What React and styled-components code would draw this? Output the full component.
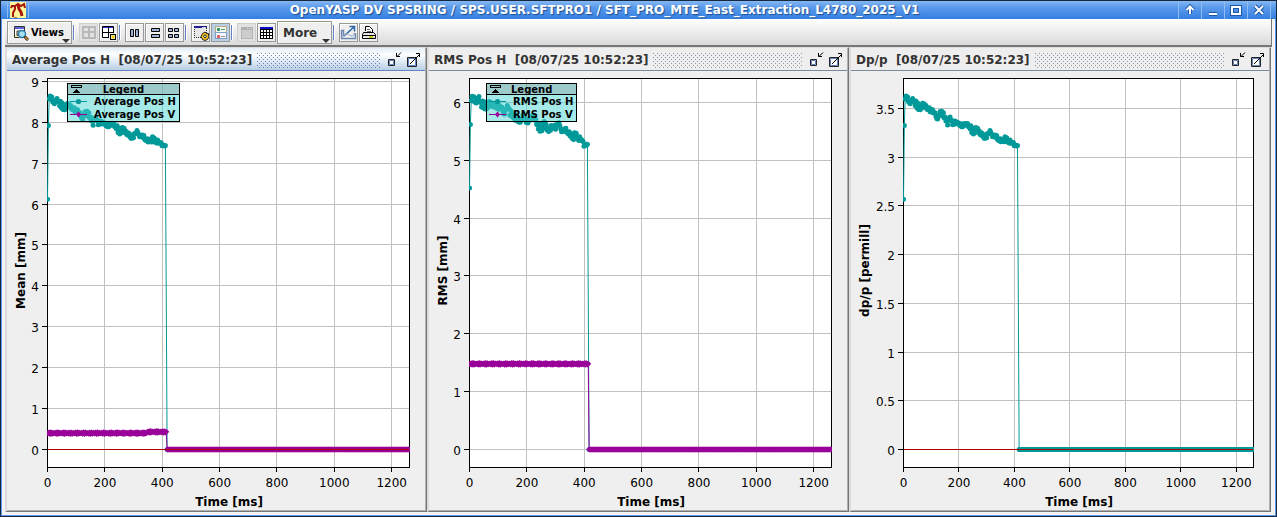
import React, { useLayoutEffect, useRef, useState } from "react";
import styled, { createGlobalStyle, css } from "styled-components";

const TEAL = "#009999";
const PURPLE = "#990099";

const GlobalStyle = createGlobalStyle`
  * { box-sizing: border-box; }
  body {
    margin: 0;
    background: #efefef;
    font-family: "DejaVu Sans", Verdana, sans-serif;
    font-size: 12px;
    color: #333;
  }
`;

/* ---------- window frame ---------- */

const Window = styled.div`
  display: flex;
  flex-direction: column;
  height: 100vh;
  min-height: 320px;
  border: 1px solid #14283f;
  background: #f3f3f3;
`;

const TitleBar = styled.header`
  display: flex;
  align-items: center;
  flex: none;
  height: 18px;
  padding: 0 5px 0 6px;
  background: linear-gradient(#86b8f2, #5b9aec 35%, #3480e0);
`;

const AppIcon = styled.div`
  display: flex;
  justify-content: center;
  width: 22px;
  border: solid #8fbcf3;
  border-width: 0 1px;
`;

const WindowTitle = styled.h1`
  flex: 1;
  margin: 0;
  padding-left: 2px;
  font-size: 12px;
  line-height: 18px;
  text-align: center;
  color: #fff;
  text-shadow: 1px 1px 1px #1c4f93;
  white-space: nowrap;
  overflow: hidden;
`;

const WindowButton = styled.button`
  display: flex;
  align-items: center;
  justify-content: center;
  width: 23px;
  height: 18px;
  padding: 0;
  border: 0;
  border-left: 1px solid #8fbcf3;
  background: none;

  &:last-of-type {
    width: 24px;
    border-right: 1px solid #8fbcf3;
  }
`;

const Body = styled.div`
  display: flex;
  flex-direction: column;
  flex: 1;
  min-height: 0;
  padding: 0 3px 3px;
  border: solid #5b9aec;
  border-width: 0 1px 1px;
`;

/* ---------- toolbar ---------- */

const Toolbar = styled.div`
  display: flex;
  align-items: center;
  gap: 1px;
  flex: none;
  height: 28px;
  padding: 1px 2px 0;
  background: linear-gradient(#fff, #dadada);
  border: solid #777;
  border-width: 0 1px 2px 0;
`;

const buttonFace = css`
  padding: 0;
  border: 1px solid #999;
  background: #efefef;
  box-shadow: inset 1px 1px 0 #fff;
  color: #333;
  font-family: inherit;
  font-weight: bold;
`;

const ToolButton = styled.button`
  ${buttonFace}
  display: flex;
  width: 19px;
  height: 19px;
  ${(p) => p.disabled && "border-color: #d0d0d0; background: #e2e2e2; box-shadow: none;"}
  ${(p) => p["aria-pressed"] && "background: #b8cfe5; box-shadow: none;"}
`;

const MenuButton = styled.button`
  ${buttonFace}
  position: relative;
  display: flex;
  align-items: center;
  gap: 2px;
  width: ${(p) => p.$width};
  height: 23px;
  padding-left: 5px;
  font-size: ${(p) => (p.$small ? "10px" : "12px")};
  color: ${(p) => (p.$small ? "#000" : "#333")};

  &::after {
    content: "";
    position: absolute;
    right: 1px;
    bottom: 0;
    border: solid transparent;
    border-width: 4px 4px 0;
    border-top-color: #333;
  }
`;

const Separator = styled.span`
  width: 5px;
  height: 15px;
  border-left: 1px solid #6382bf;
  box-shadow: inset 1px 0 0 #fff;
`;

/* ---------- panels ---------- */

const Desktop = styled.main`
  display: grid;
  grid-template-columns: repeat(3, minmax(0, 1fr));
  flex: 1;
  min-height: 0;
  margin-right: 1px;
`;

const Panel = styled.section`
  display: flex;
  flex-direction: column;
  min-height: 0;
  padding: 0 1px 1px 0;
  border: solid #777;
  border-width: 1px 1px 1px 2px;
  border-top-color: #dcdcdc;
  border-left-color: #dcdcdc;
  box-shadow: inset -1px -1px 0 #b0b0b0;
  background: #efefef;
`;

const PanelHeader = styled.div`
  --bump: ${(p) => (p.$active ? "#6382bf" : "#8a97a9")};
  display: flex;
  align-items: center;
  flex: none;
  height: 23px;
  padding: 2px 3px 0 5px;
  border-bottom: 1px solid ${(p) => (p.$active ? "#6382bf" : "#7a8a99")};
  background: ${(p) =>
    p.$active ? "linear-gradient(#e4eef7, #fff 30%, #b8cfe5)" : "#eee"};
`;

const PanelTitle = styled.h2`
  margin: 0;
  font-size: 12px;
  line-height: 16px;
  white-space: pre;
`;

const Bumps = styled.div`
  flex: 1;
  height: 15px;
  margin: 0 5px 0 5px;
  background-image:
    conic-gradient(from 270deg at 1px 1px, var(--bump) 90deg, transparent 0),
    conic-gradient(from 270deg at 1px 1px, var(--bump) 90deg, transparent 0);
  background-size: 4px 4px;
  background-position: 0 0, 2px 2px;
`;

const PanelButton = styled.button`
  display: flex;
  width: 16px;
  height: 16px;
  margin-left: 4px;
  padding: 0;
  border: 0;
  background: none;

  ${Bumps} + & { margin-left: 0; }
`;

const ChartArea = styled.div`
  position: relative;
  flex: 1;
  min-height: 0;
  overflow: hidden;
`;

const ChartSvg = styled.svg`
  position: absolute;
  inset: 0;
  font-size: 12px;
`;

const AxisTitle = styled.text`
  font-weight: bold;
  fill: #000;
  text-anchor: middle;
`;

const Legend = styled.div`
  position: absolute;
  top: 12px;
  left: ${(p) => p.$left};
  border: 1px solid #000;
  background: rgba(76, 211, 211, 0.5);
  font-size: 10px;
  font-weight: bold;
  line-height: 13px;
  color: #000;
  white-space: nowrap;
`;

const LegendTitle = styled.div`
  position: relative;
  height: 11px;
  line-height: 12px;
  border-bottom: 1px solid #000;
  background: rgba(140, 140, 140, 0.32);
  text-align: center;

  svg { position: absolute; left: 2px; top: 0; }
`;

const LegendRow = styled.div`
  display: flex;
  align-items: center;
  gap: 7px;
  padding: 0 3px 0 2px;
`;

/* ---------- measured data ---------- */

const meanH = [
  8.67, 8.46, 8.54, 8.48, 8.41, 8.34, 8.41, 8.36, 8.32, 8.28, 8.26, 8.08, 8.22, 8.23,
  8.1, 7.99, 8.11, 7.94, 8.0, 7.96, 7.91, 7.92, 7.91, 7.89, 7.75, 7.83, 7.81, 7.74,
  7.61, 7.66, 7.78, 7.69, 7.7, 7.57, 7.56, 7.55, 7.59, 7.49, 7.52, 7.45, 7.42,
];
const rmsH = [
  6.13, 5.98, 6.09, 5.97, 5.96, 5.92, 5.97, 5.92, 5.97, 5.9, 5.94, 5.79, 5.93, 5.84,
  5.77, 5.75, 5.7, 5.7, 5.76, 5.64, 5.71, 5.73, 5.67, 5.58, 5.53, 5.64, 5.57, 5.54,
  5.58, 5.57, 5.64, 5.53, 5.55, 5.48, 5.46, 5.37, 5.45, 5.34, 5.37, 5.26, 5.27,
];

const END = 1262;
const STEP = 3;

// Samples taken every 10 ms are filled in to the acquisition step.
function fill(head, samples, noise) {
  const points = [...head];
  for (let t = 9; t < 414; t += STEP) {
    const pos = Math.max(0, t / 10 - 1);
    const i = Math.min(samples.length - 1, Math.floor(pos));
    const next = samples[Math.min(samples.length - 1, i + 1)];
    const v = samples[i] + (next - samples[i]) * (pos - i);
    const settle = t > 400 ? 0.3 : 1;
    points.push([t, v + settle * noise * (Math.sin(t * 7.3) + Math.sin(t * t * 0.37)) * 0.6]);
  }
  for (let t = 417; t <= END; t += STEP) points.push([t, 0]);
  return points;
}

function flat(level, rise, noise) {
  const points = [];
  for (let t = 0; t < 416; t += STEP) {
    points.push([t, level + (t > 345 ? rise : 0) + noise * Math.sin(t * 5.1)]);
  }
  for (let t = 417; t <= END; t += STEP) points.push([t, 0]);
  return points;
}

const meanSeries = fill([[0, 6.12], [3, 7.92], [6, 8.57]], meanH, 0.06);
const rmsSeries = fill([[0, 4.52], [3, 5.62], [6, 6.03]], rmsH, 0.05);
const dispersion = 0.42;

const charts = [
  {
    title: "Average Pos H  [08/07/25 10:52:23]",
    active: true,
    zeroLine: true,
    yTitle: "Mean [mm]",
    yTicks: [0, 1, 2, 3, 4, 5, 6, 7, 8, 9],
    yRange: [-0.44, 9.07],
    left: 40,
    legendLeft: "60px",
    series: [
      { name: "Average Pos H", color: TEAL, points: meanSeries },
      { name: "Average Pos V", color: PURPLE, points: flat(0.4, 0.03, 0.02), diamond: true },
    ],
  },
  {
    title: "RMS Pos H  [08/07/25 10:52:23]",
    yTitle: "RMS [mm]",
    yTicks: [0, 1, 2, 3, 4, 5, 6],
    yRange: [-0.311, 6.413],
    left: 40,
    legendLeft: "57px",
    series: [
      { name: "RMS Pos H", color: TEAL, points: rmsSeries },
      { name: "RMS Pos V", color: PURPLE, points: flat(1.48, 0, 0.015), diamond: true },
    ],
  },
  {
    title: "Dp/p  [08/07/25 10:52:23]",
    zeroLine: true,
    yTitle: "dp/p [permill]",
    yTicks: [0, 0.5, 1, 1.5, 2, 2.5, 3, 3.5],
    yRange: [-0.185, 3.809],
    left: 52,
    series: [
      { name: "Dp/p", color: TEAL, points: meanSeries.map(([t, v]) => [t, v * dispersion]) },
    ],
  },
];

/* ---------- chart ---------- */

function useSize() {
  const ref = useRef(null);
  const [size, setSize] = useState({ width: 0, height: 0 });
  useLayoutEffect(() => {
    const measure = () =>
      setSize({ width: ref.current.clientWidth, height: ref.current.clientHeight });
    measure();
    const observer = new ResizeObserver(measure);
    observer.observe(ref.current);
    return () => observer.disconnect();
  }, []);
  return [ref, size];
}

function Series({ series, x, y }) {
  const { points, color, diamond } = series;
  const path = points.map(([t, v], i) => `${i ? "L" : "M"}${x(t)} ${y(v)}`).join("");
  return (
    <g fill={color}>
      <path d={path} fill="none" stroke={color} />
      {points.map(([t, v]) => {
        const cx = x(t);
        const cy = y(v);
        return diamond ? (
          <path key={t} d={`M${cx - 3} ${cy}L${cx} ${cy - 3}L${cx + 3} ${cy}L${cx} ${cy + 3}Z`} />
        ) : (
          <circle key={t} cx={cx} cy={cy} r={2.5} />
        );
      })}
    </g>
  );
}

function Chart({ chart, id }) {
  const [ref, { width, height }] = useSize();
  const left = chart.left;
  const right = width - 16;
  const top = 7;
  const bottom = height - 43;
  const [lo, hi] = chart.yRange;
  const x = (t) => left + 0.5 + (t / END) * (right - left);
  const y = (v) => top + 0.5 + ((hi - v) / (hi - lo)) * (bottom - top);
  const snap = (n) => Math.floor(n) + 0.5;
  const xTicks = [0, 200, 400, 600, 800, 1000, 1200];

  return (
    <ChartArea ref={ref}>
      {width > 0 && (
        <ChartSvg width={width} height={height} role="img" aria-label={chart.title}>
          <clipPath id={id}>
            <rect x={left} y={top} width={right - left + 1} height={bottom - top} />
          </clipPath>
          <rect x={left} y={top} width={right - left} height={bottom - top} fill="#fff" />
          <g stroke="#c0c0c0">
            {xTicks.map((t) => (
              <path key={t} d={`M${snap(x(t))} ${top}V${bottom}`} />
            ))}
            {chart.yTicks.map((v) => (
              <path key={v} d={`M${left} ${snap(y(v))}H${right}`} />
            ))}
          </g>
          <rect
            x={left + 0.5}
            y={top + 0.5}
            width={right - left}
            height={bottom - top}
            fill="none"
            stroke="#000"
          />
          <g stroke="#000">
            {xTicks.map((t) => (
              <path key={t} d={`M${snap(x(t))} ${bottom}v5`} />
            ))}
            {chart.yTicks.map((v) => (
              <path key={v} d={`M${left - 5} ${snap(y(v))}h5`} />
            ))}
          </g>
          <g clipPath={`url(#${id})`}>
            {chart.series.map((s) => (
              <Series key={s.name} series={s} x={x} y={y} />
            ))}
            {chart.zeroLine && (
              <path d={`M${left + 1} ${snap(y(0))}H${right}`} stroke="#b00000" />
            )}
          </g>
          <g fill="#000">
            {xTicks.map((t) => (
              <text key={t} x={x(t)} y={bottom + 20} textAnchor="middle">{t}</text>
            ))}
            {chart.yTicks.map((v) => (
              <text key={v} x={left - 8} y={snap(y(v)) + 5} textAnchor="end">{v}</text>
            ))}
          </g>
          <AxisTitle x={(left + right) / 2 + 1} y={bottom + 39}>Time [ms]</AxisTitle>
          <AxisTitle transform={`translate(18 ${(top + bottom) / 2 - 2}) rotate(-90)`}>
            {chart.yTitle}
          </AxisTitle>
        </ChartSvg>
      )}
      {chart.legendLeft && (
        <Legend $left={chart.legendLeft}>
          <LegendTitle>
            <svg width="12" height="10" shapeRendering="crispEdges">
              <path d="M1 1h11v3H1zM6 5l4 4H2z" fill="#000" />
              <path d="M2 2h9v1H2z" fill="#9cc8c8" />
            </svg>
            Legend
          </LegendTitle>
          {chart.series.map((s) => (
            <LegendRow key={s.name}>
              <svg width="17" height="9">
                <path d="M0 4.5h17" stroke={s.color} />
                {s.diamond ? (
                  <path d="M6 4.5l2.500-3 2.500 3-2.500 3z" fill={s.color} />
                ) : (
                  <circle cx="8.5" cy="4.5" r="2.6" fill={s.color} />
                )}
              </svg>
              {s.name}
            </LegendRow>
          ))}
        </Legend>
      )}
    </ChartArea>
  );
}

/* ---------- icons ---------- */

const Icon = ({ children, size = 17 }) => (
  <svg width={size} height={size} viewBox={`0 0 ${size} ${size}`} fill="none" shapeRendering="crispEdges" aria-hidden="true">
    {children}
  </svg>
);

const Gear = () => (
  <g shapeRendering="auto">
    <path d="M13 8l1.5 1.5h2V12l.5.5-1.5 3-2.5 1-2.5-1L9 12.5l1.5-3z" fill="#f2c21c" stroke="#222" />
    <circle cx="13" cy="12.3" r="1.3" fill="#fff" stroke="#222" />
  </g>
);

const icons = {
  yasp: (
    <Icon size={16}>
      <path d="M0 0h16v16H0z" fill="#fff79a" />
      <g shapeRendering="auto" stroke="#a8160c" strokeWidth="2">
        <path d="M1 6l1-2h3l3-2 3 2 3-2 1 4" />
        <path d="M5 4l0 3-2 4 0 4" />
        <path d="M8 3l1 4 2 3 1 4" strokeWidth="3" />
      </g>
      <path d="M4 15h3" stroke="#e07020" />
    </Icon>
  ),
  views: (
    <svg width="16" height="16" fill="none" aria-hidden="true">
      <path d="M1.5 1.5h10v9h-10z" fill="#fff" stroke="#333" />
      <path d="M2 2h9v2H2z" fill="#5a62d8" />
      <path d="M1.5 8.5v4h5M4 6h4v4H4z" stroke="#333" fill="#f4e9b0" />
      <circle cx="9" cy="9" r="3.5" fill="#a6e2f5" stroke="#2a7ba6" strokeWidth="1.4" />
      <path d="M11.5 11.5L15 15" stroke="#222" strokeWidth="3" />
      <path d="M12 12l3 3" stroke="#e08a30" strokeWidth="1.4" />
    </svg>
  ),
  gridOff: (
    <Icon>
      <path d="M3 3h12v11H3zM9 3v11M3 8h12" stroke="#b8b8b8" strokeWidth="2" />
    </Icon>
  ),
  layout: (
    <Icon>
      <g shapeRendering="auto">
        <path d="M2.500 2.500h11v11h-11zM8.500 2v12M2 8.500h12" fill="#fff" stroke="#000" />
        <path d="M3 3h5v1H3zM9 3h4v1H9z" fill="#2a2ae0" />
        <path d="M9 9h7v7H9z" fill="#efefef" />
        <path d="M10 10h6v6h-6z" fill="#000" />
        <path d="M11 11h4v4h-4z" fill="#ece08a" />
        <path d="M12 12h2v2h-2z" fill="#f0c800" />
      </g>
    </Icon>
  ),
  columns: (
    <Icon>
      <path d="M4.500 5.500h3v7h-3zM9.500 5.500h3v7h-3z" fill="#9db4d4" stroke="#000" shapeRendering="auto" />
    </Icon>
  ),
  rows: (
    <Icon>
      <path d="M5.500 4.500h8v3h-8zM5.500 10.500h8v3h-8z" fill="#9db4d4" stroke="#000" shapeRendering="auto" />
    </Icon>
  ),
  grid: (
    <Icon>
      <path d="M2.500 4.500h4v3h-4zM8.500 4.500h4v3h-4zM2.500 10.500h4v3h-4zM8.500 10.500h4v3h-4z" fill="#9db4d4" stroke="#000" shapeRendering="auto" />
    </Icon>
  ),
  settings: (
    <Icon>
      <path d="M2.500 3.500h12v10h-12z" fill="#e6e6e6" stroke="#333" strokeDasharray="1 1" />
      <path d="M2 2h13v2H2z" fill="#20208c" />
      <path d="M10 3h4" stroke="#c8c8f0" />
      <Gear />
    </Icon>
  ),
  legend: (
    <Icon>
      <path d="M3.500 2.500h11v6h-11z" fill="#f5f8f2" stroke="#b9ab84" />
      <path d="M3.500 8.500h11v6h-11z" fill="#f5f8fc" stroke="#7f9fc4" />
      <path d="M5 4h3v3H5z" fill="#35a06a" />
      <path d="M5 11h3v3H5z" fill="#e86060" />
      <path d="M9 5.500h4" stroke="#4f9f78" />
      <path d="M9 12.500h4" stroke="#a8909c" />
    </Icon>
  ),
  windowOff: (
    <Icon>
      <path d="M3.500 3.500h11v11h-11z" fill="#cdcdcd" stroke="#b4b4b4" />
      <path d="M3 3h12v3H3z" fill="#b0b0b0" />
      <path d="M9 4.500h5" stroke="#ddd" strokeDasharray="1 1" />
    </Icon>
  ),
  table: (
    <Icon>
      <path d="M2 3h13v12H2z" fill="#000" />
      <path d="M2 3h13v2H2z" fill="#0a0ac8" />
      {[3, 6, 9, 12].map((cx) =>
        [6, 9, 12].map((cy) => <path key={`${cx}-${cy}`} d={`M${cx} ${cy}h2v2h-2z`} fill="#fff" />)
      )}
    </Icon>
  ),
  exportChart: (
    <Icon>
      <g shapeRendering="auto">
        <path d="M1.500 6v8.500h14V10h-2M1.500 6.500h2v6" stroke="#6b87ad" strokeWidth="1.500" />
        <path d="M4 12l10-9M9.500 2.500h5v5" stroke="#2867a4" strokeWidth="1.500" />
        <path d="M3 12c2 0 2-2 4-2s2 2 7 2" stroke="#8fa8c8" />
      </g>
    </Icon>
  ),
  print: (
    <Icon>
      <path d="M5.500 7V2.500h4l3 3V8" fill="#fff" stroke="#000" shapeRendering="auto" />
      <path d="M7 5h3M7 7h4" stroke="#666" />
      <path d="M3.500 8.500h10l2 2v4h-13v-4z" fill="#e4e4e4" stroke="#000" shapeRendering="auto" />
      <path d="M3 11.500h12" stroke="#000" />
      <path d="M9 13h4" stroke="#c8d020" strokeWidth="2" />
    </Icon>
  ),
  iconify: (
    <Icon size={16}>
      <g shapeRendering="auto">
        <path d="M2.500 7.500h6v6h-6z" fill="#fff" stroke="#222" />
        <path d="M3.500 8.500h4v4h-4z" stroke="#6382bf" />
        <path d="M15 .5l-4 4M10.500 1v3.500H14" stroke="#000" />
      </g>
    </Icon>
  ),
  maximize: (
    <Icon size={16}>
      <g shapeRendering="auto">
        <path d="M1.500 5.500h9v9h-9z" fill="#fff" stroke="#222" />
        <path d="M2.500 6.500h7v7h-7z" stroke="#6382bf" />
        <path d="M4 12l9-9M10 1.500h3.500V5" stroke="#000" />
      </g>
    </Icon>
  ),
};

const WindowGlyph = ({ d }) => (
  <svg width="14" height="14" fill="none" aria-hidden="true">
    <path d={d} stroke="#1d57a5" strokeWidth="4" />
    <path d={d} stroke="#fff" strokeWidth="2" />
  </svg>
);

const windowButtons = [
  { label: "Shade", d: "M7 11V4M3.500 7L7 3.500 10.500 7" },
  { label: "Minimize", d: "M3 11h8" },
  { label: "Maximize", d: "M3 4h8v7H3z" },
  { label: "Close", d: "M3 3l8 8M11 3l-8 8" },
];

const Tool = ({ icon, label, ...rest }) => (
  <ToolButton type="button" aria-label={label} {...rest}>{icons[icon]}</ToolButton>
);

export default function App() {
  return (
    <>
      <GlobalStyle />
      <Window>
        <TitleBar>
          <AppIcon>{icons.yasp}</AppIcon>
          <WindowTitle>
            OpenYASP DV SPSRING / SPS.USER.SFTPRO1 / SFT_PRO_MTE_East_Extraction_L4780_2025_V1
          </WindowTitle>
          {windowButtons.map((b) => (
            <WindowButton key={b.label} type="button" aria-label={b.label}>
              <WindowGlyph d={b.d} />
            </WindowButton>
          ))}
        </TitleBar>
        <Body>
          <Toolbar role="toolbar">
            <MenuButton type="button" $width="65px" $small>{icons.views}Views</MenuButton>
            <Separator />
            <Tool icon="gridOff" label="Grid" disabled />
            <Tool icon="layout" label="Layout" />
            <Separator />
            <Tool icon="columns" label="Columns" />
            <Tool icon="rows" label="Rows" />
            <Tool icon="grid" label="Tiles" />
            <Separator />
            <Tool icon="settings" label="Settings" />
            <Tool icon="legend" label="Show legend" aria-pressed />
            <Separator />
            <Tool icon="windowOff" label="Window" disabled />
            <Tool icon="table" label="Data table" />
            <MenuButton type="button" $width="55px">More</MenuButton>
            <Separator />
            <Tool icon="exportChart" label="Export" />
            <Tool icon="print" label="Print" />
          </Toolbar>
          <Desktop>
            {charts.map((chart, i) => (
              <Panel key={chart.title}>
                <PanelHeader $active={chart.active}>
                  <PanelTitle>{chart.title}</PanelTitle>
                  <Bumps />
                  <PanelButton type="button" aria-label="Iconify">{icons.iconify}</PanelButton>
                  <PanelButton type="button" aria-label="Maximize">{icons.maximize}</PanelButton>
                </PanelHeader>
                <Chart chart={chart} id={`plot-${i}`} />
              </Panel>
            ))}
          </Desktop>
        </Body>
      </Window>
    </>
  );
}
